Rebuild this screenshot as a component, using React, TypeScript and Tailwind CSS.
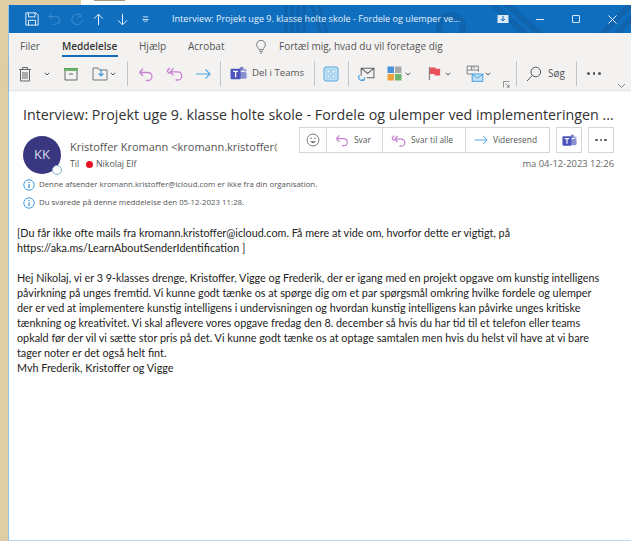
import type { ReactNode } from 'react';

const ui = { fontFamily: '"Open Sans", "Noto Sans", sans-serif' };
const bodyFont = { fontFamily: 'Lato, "Open Sans", sans-serif' };

function Icon({ size = 16, box = 16, children, className = '' }: { size?: number; box?: number; children: ReactNode; className?: string }) {
  return (
    <svg width={size} height={size} viewBox={`0 0 ${box} ${box}`} fill="none" className={`shrink-0 ${className}`}>
      {children}
    </svg>
  );
}

const Chevron = ({ className = '' }: { className?: string }) => (
  <Icon size={6} box={6} className={className}>
    <path d="M0.8 1.8 3 4 5.2 1.8" stroke="#555" strokeWidth="1" />
  </Icon>
);

const Reply = ({ color = '#c77fd1', size = 16 }: { color?: string; size?: number }) => (
  <Icon size={size}>
    <path d="M1.5 6.5 5 2.8M1.5 6.5 5 10M1.5 6.5H10a4 4 0 0 1 0 8H8" stroke={color} strokeWidth="1.3" />
  </Icon>
);

const ReplyAll = ({ color = '#c77fd1', size = 17 }: { color?: string; size?: number }) => (
  <Icon size={size}>
    <path d="M4 6.5 7 3.2M4 6.5 7 9.6M4 6.5H11a3.8 3.8 0 0 1 0 7.6H9M1 5.6 3.6 2.8M1 5.6 3.6 8.3" stroke={color} strokeWidth="1.3" />
  </Icon>
);

const Forward = ({ size = 16 }: { size?: number }) => (
  <Icon size={size}>
    <path d="M1 8H15M10.5 3.5 15 8 10.5 12.5" stroke="#4ba6e6" strokeWidth="1.1" />
  </Icon>
);

const TeamsMark = ({ size = 17 }: { size?: number }) => (
  <Icon size={size}>
    <circle cx="11" cy="3.6" r="2" fill="#7b83c9" />
    <circle cx="14.2" cy="5" r="1.4" fill="#a3a9de" />
    <rect x="9" y="6.5" width="6.6" height="6.5" rx="1.5" fill="#8a90d4" />
    <rect x="0.5" y="3.5" width="9.5" height="10" rx="1" fill="#4b53bc" />
    <path d="M3 6H7.6M5.3 6V11.5" stroke="#fff" strokeWidth="1.2" />
  </Icon>
);

const Divider = () => <div className="w-px h-[25px] bg-[#c4c4c4] shrink-0" />;

function InfoDot() {
  return (
    <Icon size={12} box={12}>
      <circle cx="6" cy="6" r="5.2" stroke="#3d9be0" strokeWidth="1" />
      <path d="M6 5.2V9M6 3V4.1" stroke="#2b7fc0" strokeWidth="1.2" />
    </Icon>
  );
}

// Stripes of the Office theme behind the title bar
function TitleArt() {
  return (
    <svg width="631" height="28" viewBox="0 0 631 28" fill="none" className="absolute left-0 top-0">
      <g stroke="#0f63ab" strokeWidth="3">
        <path d="M277 0V28M283 0V28M289 0V28M295 0V28" />
        <path d="M303 0 312 28M310 0 318 28" />
      </g>
      <g stroke="#0f64ad" strokeWidth="6">
        <circle cx="442" cy="22" r="12" />
        <path d="M480 -4 520 32M494 -4 534 32" />
        <path d="M590 32 625 -4M604 32 640 -4" />
      </g>
    </svg>
  );
}

function TitleBar() {
  return (
    <div className="relative h-[28px] bg-[#106ebe] flex items-center shrink-0 overflow-hidden" style={ui}>
      <TitleArt />
      <div className="relative flex items-center w-full">
        <Icon size={14} className="ml-[16px]">
          <path d="M1 1H12.5L15 3.5V15H1Z" stroke="#e8f1fa" strokeWidth="1.1" />
          <path d="M4 1V5.5H11.5V1M4 15V9.5H12V15" stroke="#e8f1fa" strokeWidth="1.1" />
        </Icon>
        <Icon size={14} className="ml-[8px]">
          <path d="M2 5 5.5 1.5M2 5 5.5 8.5M2 5H10a4.5 4.5 0 0 1 0 9H7" stroke="#3f8fd2" strokeWidth="1.1" />
        </Icon>
        <Icon size={14} className="ml-[9px]">
          <path d="M13 5 10 2M13 5 9 6M13 5A6 6 0 1 0 14 9" stroke="#3f8fd2" strokeWidth="1.1" />
        </Icon>
        <Icon size={13} className="ml-[8px]">
          <path d="M8 15V1.5M2.5 7 8 1.5 13.5 7" stroke="#fff" strokeWidth="1.1" />
        </Icon>
        <Icon size={13} className="ml-[11px]">
          <path d="M8 1V14.5M2.5 9 8 14.5 13.5 9" stroke="#fff" strokeWidth="1.1" />
        </Icon>
        <Icon size={7} box={8} className="ml-[13px]">
          <path d="M1 1H7M1 4 4 7 7 4Z" stroke="#e8f1fa" strokeWidth="1" />
        </Icon>
        <span className="ml-[23px] text-[9.1px] text-[#e6f0fa] whitespace-nowrap w-[289px]">
          Interview: Projekt uge 9. klasse holte skole - Fordele og ulemper ve...
        </span>
        <Icon size={12} box={12} className="ml-[36px]">
          <rect x="0.5" y="2" width="11" height="8" fill="#dbe9f6" />
          <path d="M6 3V8M4 6 6 8 8 6" stroke="#106ebe" strokeWidth="1" />
        </Icon>
        <div className="ml-[27px] w-[8px] h-px bg-[#dbe9f6]" />
        <div className="ml-[28px] w-[8px] h-[8px] border border-[#dbe9f6] rounded-[1px]" />
        <Icon size={9} box={9} className="ml-[28px]">
          <path d="M0.5 0.5 8.5 8.5M8.5 0.5 0.5 8.5" stroke="#e8f1fa" strokeWidth="1" />
        </Icon>
      </div>
    </div>
  );
}

function MenuRow() {
  return (
    <div className="h-[24px] flex items-center text-[10px] text-[#555] shrink-0 pt-[3px]" style={ui}>
      <span className="ml-[11px] w-[42px]">Filer</span>
      <span className="relative w-[77px] font-semibold text-[#333]">
        Meddelelse
        <span className="absolute left-0 top-[16px] w-[56px] h-[2px] bg-[#106ebe]" />
      </span>
      <span className="w-[49px]">Hjælp</span>
      <span className="w-[66px]">Acrobat</span>
      <Icon size={14} className="mr-[11px]">
        <path d="M5.6 11C5.4 9 3 8 3 5.4a5 5 0 0 1 10 0C13 8 10.6 9 10.4 11ZM6 13H10M7 15H9" stroke="#666" strokeWidth="1" />
      </Icon>
      <span className="whitespace-nowrap">Fortæl mig, hvad du vil foretage dig</span>
    </div>
  );
}

function Ribbon() {
  return (
    <div className="relative h-[33px] flex items-center shrink-0 shadow-[0_1px_2px_rgba(0,0,0,0.14)]" style={ui}>
      <Icon size={16} className="ml-[8px]">
        <path d="M2 3.5H14M5.5 3.5V1.5H10.5V3.5M3.5 3.5V15H12.5V3.5M6 6V13M8 6V13M10 6V13" stroke="#666" strokeWidth="1" />
      </Icon>
      <Chevron className="ml-[11px]" />
      <Icon size={16} className="ml-[13px]">
        <rect x="1" y="2" width="14" height="3" fill="#6fb36f" />
        <path d="M2 5V14H14V5M6 8H10" stroke="#666" strokeWidth="1" />
        <path d="M1 2.5H15" stroke="#5aa35a" strokeWidth="1" />
      </Icon>
      <Icon size={16} className="ml-[13px]">
        <path d="M1 14V2H6L7.5 4H15V14Z" stroke="#777" strokeWidth="1" />
        <path d="M9 3V10M6.5 7.5 9 10 11.5 7.5" stroke="#3d9be0" strokeWidth="1.1" />
      </Icon>
      <Chevron className="ml-[2px]" />
      <div className="ml-[11px]"><Divider /></div>
      <div className="ml-[10px]"><Reply /></div>
      <div className="ml-[12px]"><ReplyAll /></div>
      <div className="ml-[12px]"><Forward /></div>
      <div className="ml-[9px]"><Divider /></div>
      <div className="ml-[9px]"><TeamsMark /></div>
      <span className="ml-[5px] w-[52px] text-[9.7px] text-[#555] whitespace-nowrap">Del i Teams</span>
      <div className="ml-[10px]"><Divider /></div>
      <Icon size={16} className="ml-[8px]">
        <rect x="1" y="1" width="14" height="14" rx="2" fill="#bfe0f5" stroke="#5aa9de" />
        <g fill="#f2f9fd" stroke="#5aa9de" strokeWidth="0.6">
          <circle cx="5.5" cy="5.5" r="1.7" />
          <circle cx="10.5" cy="5.5" r="1.7" />
          <circle cx="5.5" cy="10.5" r="1.7" />
          <circle cx="10.5" cy="10.5" r="1.7" />
        </g>
      </Icon>
      <div className="ml-[9px]"><Divider /></div>
      <Icon size={17} className="ml-[9px]">
        <path d="M3 10V3H15V12H8M3 3 9 8 15 3" stroke="#666" strokeWidth="1" />
        <path d="M1.5 9.5a3 3 0 0 0 4.5 4M6 11.5V14H3.5" stroke="#3d9be0" strokeWidth="1" />
      </Icon>
      <Icon size={15} box={15} className="ml-[12px]">
        <rect x="0.5" y="0.5" width="6.5" height="6.5" fill="#4a90d9" />
        <rect x="8" y="0.5" width="6.5" height="6.5" fill="#a8a8a8" />
        <rect x="0.5" y="8" width="6.5" height="6.5" fill="#eda13c" />
        <rect x="8" y="8" width="6.5" height="6.5" fill="#6fb36f" />
      </Icon>
      <Chevron className="ml-[3px]" />
      <Icon size={15} className="ml-[16px]">
        <path d="M2.5 1V15" stroke="#666" strokeWidth="1" />
        <path d="M3 1.5H9V3H14V10H8V8.5H3Z" fill="#e8505b" />
      </Icon>
      <Chevron className="ml-[3px]" />
      <Icon size={18} className="ml-[15px]">
        <path d="M1 8V1H11V6M1 8H6M1 4.5H11M5 1V4.5M7 1V3" stroke="#777" strokeWidth="0.8" />
        <rect x="5.5" y="8" width="9.5" height="6.5" fill="#bfe0f5" stroke="#3d9be0" strokeWidth="0.8" />
        <path d="M5.5 8.5 10.2 11.5 15 8.5" stroke="#3d9be0" strokeWidth="0.8" />
      </Icon>
      <Chevron className="ml-[1px]" />
      <Icon size={7} box={8} className="absolute left-[494px] top-[24px]">
        <path d="M0.5 7.5V0.5H7.5M3 3 7 7M7 4V7H4" stroke="#666" strokeWidth="0.8" />
      </Icon>
      <div className="ml-[25px]"><Divider /></div>
      <Icon size={16} className="ml-[9px]">
        <circle cx="9.8" cy="6" r="4.8" stroke="#555" strokeWidth="1" />
        <path d="M6.3 9.5 1 15" stroke="#555" strokeWidth="1" />
      </Icon>
      <span className="ml-[6px] w-[28px] text-[10px] text-[#555]">Søg</span>
      <Divider />
      <span className="ml-[10px] flex gap-[3px]">
        <i className="w-[2.5px] h-[2.5px] rounded-full bg-[#555]" />
        <i className="w-[2.5px] h-[2.5px] rounded-full bg-[#555]" />
        <i className="w-[2.5px] h-[2.5px] rounded-full bg-[#555]" />
      </span>
      <Icon size={9} box={9} className="absolute left-[608px] top-[24px]">
        <path d="M1 3 4.5 6.5 8 3" stroke="#777" strokeWidth="0.9" />
      </Icon>
    </div>
  );
}

function ActionCell({ width, icon, label }: { width: string; icon: ReactNode; label: string }) {
  return (
    <div className={`${width} h-full flex items-center border-l border-[#d6d6d6] pl-[8px] gap-[5px]`}>
      {icon}
      <span className="whitespace-nowrap">{label}</span>
    </div>
  );
}

function MessageHeader() {
  return (
    <div className="pl-[14px] shrink-0" style={ui}>
      <h1 className="pt-[15px] h-[37px] text-[14.25px] leading-[20px] text-[#333] whitespace-nowrap">
        Interview: Projekt uge 9. klasse holte skole - Fordele og ulemper ved implementeringen ...
      </h1>
      <div className="flex">
        <div className="relative mt-[9px] w-[38px] h-[38px] rounded-full bg-[#39377f] text-[#d8d8ea] text-[13px] flex items-center justify-center shrink-0">
          KK
          <span className="absolute right-[-1px] bottom-[-1px] w-[10px] h-[10px] rounded-full bg-white border border-[#7fb2cc]" />
        </div>
        <div className="ml-[9px] w-[207px] overflow-hidden shrink-0">
          <div className="mt-[12px] h-[18px] text-[11px] leading-[16px] text-[#555] whitespace-nowrap">
            Kristoffer Kromann &lt;kromann.kristoffer@icloud.com&gt;
          </div>
          <div className="h-[15px] flex items-center text-[8.8px] text-[#555]">
            <span className="w-[16px]">Til</span>
            <span className="w-[7px] h-[7px] rounded-full bg-[#e81123] mr-[3px]" />
            Nikolaj Elf
          </div>
        </div>
        <div className="ml-[13px] flex flex-col items-end w-[324px]">
          <div className="flex h-[26px] gap-[6px] text-[8.4px] text-[#555]">
            <div className="flex h-full border border-[#d6d6d6]">
              <div className="w-[26px] h-full flex items-center justify-center">
                <Icon size={14}>
                  <circle cx="8" cy="8" r="6.8" stroke="#666" strokeWidth="1" />
                  <path d="M4.8 9.5a3.6 3.6 0 0 0 6.4 0Z" fill="#666" />
                  <circle cx="5.8" cy="6" r="0.9" fill="#666" />
                  <circle cx="10.2" cy="6" r="0.9" fill="#666" />
                </Icon>
              </div>
              <ActionCell width="w-[56px]" icon={<Reply size={14} />} label="Svar" />
              <ActionCell width="w-[83px]" icon={<ReplyAll size={15} />} label="Svar til alle" />
              <ActionCell width="w-[84px]" icon={<Forward size={14} />} label="Videresend" />
            </div>
            <div className="w-[26px] h-full border border-[#d6d6d6] flex items-center justify-center">
              <TeamsMark size={15} />
            </div>
            <div className="w-[26px] h-full border border-[#d6d6d6] flex items-center justify-center gap-[2px]">
              <i className="w-[2.5px] h-[2.5px] rounded-full bg-[#555]" />
              <i className="w-[2.5px] h-[2.5px] rounded-full bg-[#555]" />
              <i className="w-[2.5px] h-[2.5px] rounded-full bg-[#555]" />
            </div>
          </div>
          <div className="mt-[4px] text-[9.4px] text-[#666]">ma 04-12-2023 12:26</div>
        </div>
      </div>
      <div className="mt-[1px] h-[19px] flex items-center gap-[4px] text-[7.85px] text-[#555]">
        <InfoDot />
        Denne afsender kromann.kristoffer@icloud.com er ikke fra din organisation.
      </div>
      <div className="h-[17px] flex items-center gap-[4px] text-[7.85px] text-[#555]">
        <InfoDot />
        Du svarede på denne meddelelse den 05-12-2023 11:28.
      </div>
    </div>
  );
}

function MessageBody() {
  return (
    <div className="pl-[8px] pt-[14px] text-[10.8px] leading-[15px] text-[#222] whitespace-nowrap" style={bodyFont}>
      <p>[Du får ikke ofte mails fra kromann.kristoffer@icloud.com. Få mere at vide om, hvorfor dette er vigtigt, på</p>
      <p>https://aka.ms/LearnAboutSenderIdentification ]</p>
      <p className="h-[15px]" />
      <p>Hej Nikolaj, vi er 3 9-klasses drenge, Kristoffer, Vigge og Frederik, der er igang med en projekt opgave om kunstig intelligens</p>
      <p>påvirkning på unges fremtid. Vi kunne godt tænke os at spørge dig om et par spørgsmål omkring hvilke fordele og ulemper</p>
      <p>der er ved at implementere kunstig intelligens i undervisningen og hvordan kunstig intelligens kan påvirke unges kritiske</p>
      <p>tænkning og kreativitet. Vi skal aflevere vores opgave fredag den 8. december så hvis du har tid til et telefon eller teams</p>
      <p>opkald før der vil vi sætte stor pris på det. Vi kunne godt tænke os at optage samtalen men hvis du helst vil have at vi bare</p>
      <p>tager noter er det også helt fint.</p>
      <p>Mvh Frederik, Kristoffer og Vigge</p>
    </div>
  );
}

export default function App() {
  return (
    <div className="w-[631px] h-[541px] overflow-hidden flex flex-col bg-[#dfcda5]">
      <div className="h-[5px] flex shrink-0">
        <div className="w-[81px]" />
        <div className="flex-1 bg-white">
          <div className="ml-[13px] w-[31px] h-px bg-[#a89880]" />
        </div>
      </div>
      <div className="flex-1 min-h-0 ml-[8px] flex flex-col bg-white border-l border-[#8fc1ea]">
        <TitleBar />
        <div className="bg-[#f3f2f1] shrink-0">
          <MenuRow />
          <Ribbon />
        </div>
        <MessageHeader />
        <MessageBody />
      </div>
      <div className="ml-[8px] h-px bg-[#bcd6ec] shrink-0" />
    </div>
  );
}
